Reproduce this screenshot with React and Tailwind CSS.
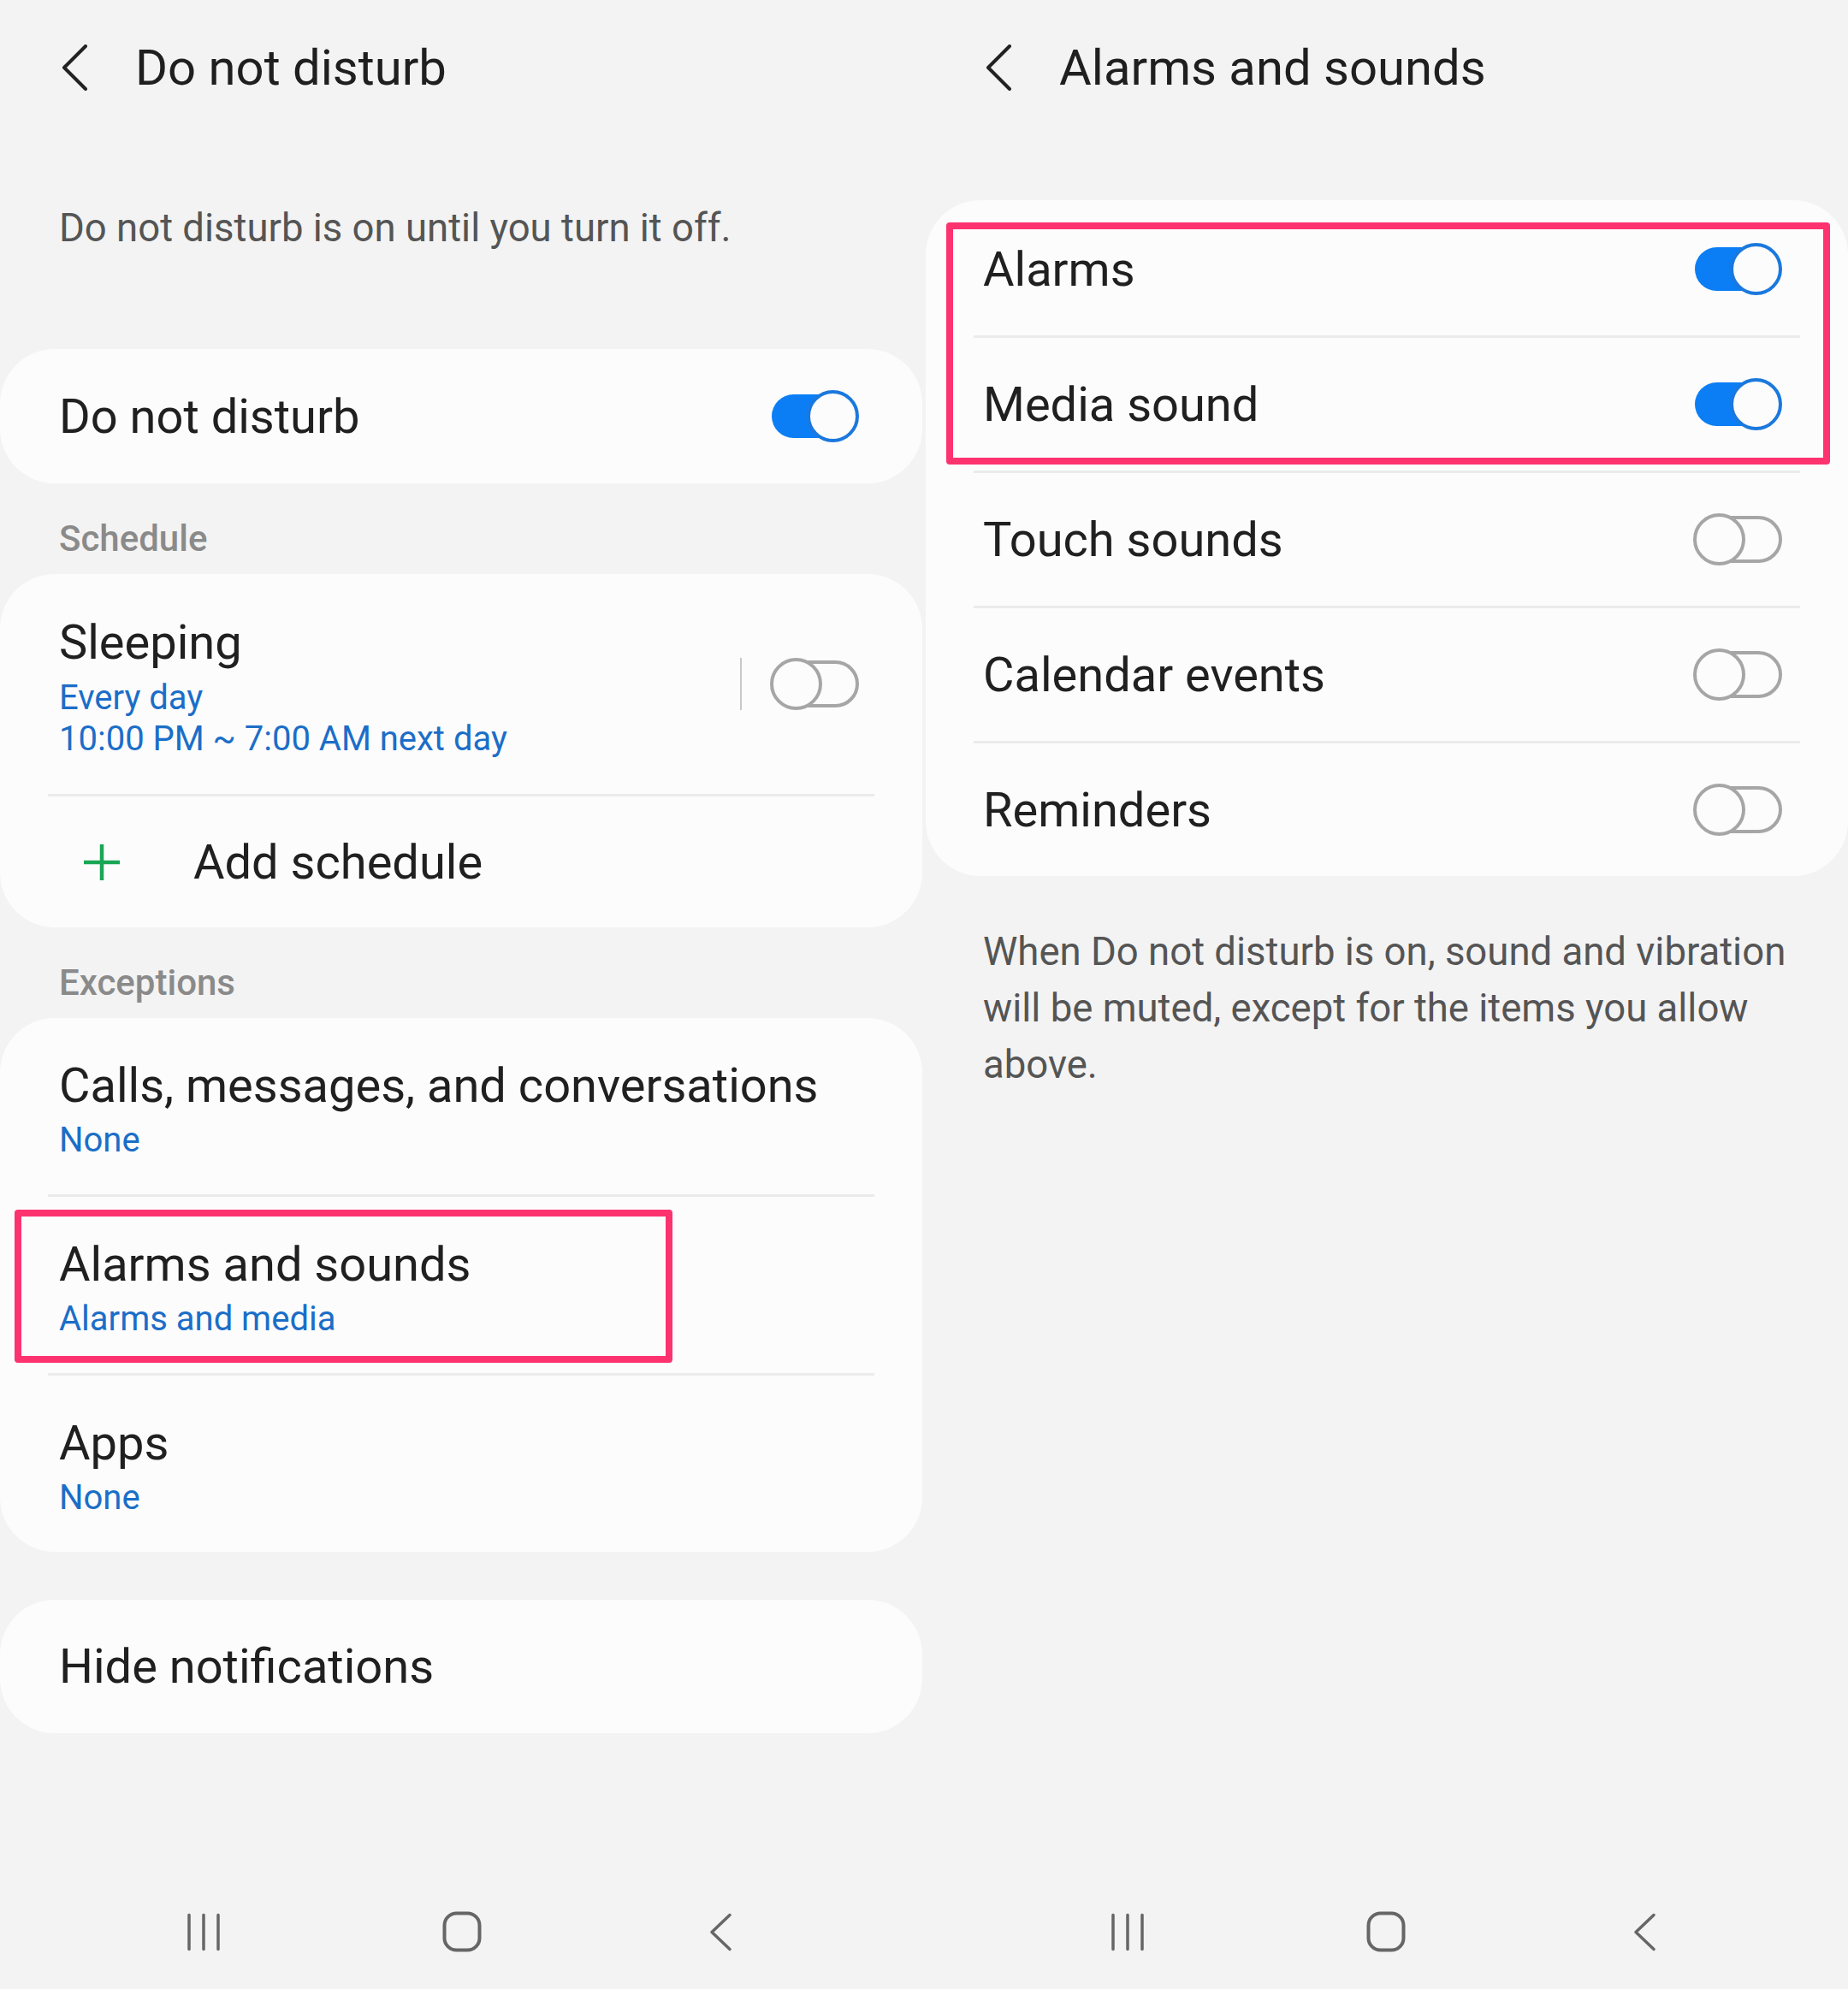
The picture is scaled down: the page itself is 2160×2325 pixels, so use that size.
import React from "react";

function Toggle({ on }) {
  if (on) {
    return (
      <div className="relative w-[102px] h-[61px] shrink-0">
        <div className="absolute left-0 top-[5px] h-[51px] w-[92px] rounded-full bg-[#0b7ef5]" />
        <div className="absolute right-0 top-0 h-[61px] w-[61px] rounded-full border-[4px] border-[#1b78dd] bg-[#fcfcfc]" />
      </div>
    );
  }
  return (
    <div className="relative w-[104px] h-[61px] shrink-0">
      <div className="absolute right-0 top-[3px] h-[55px] w-[90px] rounded-full border-[4px] border-[#a6a6a6]" />
      <div className="absolute left-0 top-0 h-[61px] w-[61px] rounded-full border-[4px] border-[#a6a6a6] bg-[#fcfcfc]" />
    </div>
  );
}

function BackChevron() {
  return (
    <svg width="32" height="54" viewBox="0 0 32 54" fill="none" className="shrink-0">
      <polyline points="28,2 3,27 28,52" stroke="#222222" strokeWidth="4" strokeLinecap="round" strokeLinejoin="round" />
    </svg>
  );
}

function Header({ title }) {
  return (
    <div className="h-[158px] flex items-center pl-[72px] shrink-0">
      <BackChevron />
      <div className="ml-[54px] text-[58px] leading-[70px] text-[#1f1f1f]">{title}</div>
    </div>
  );
}

function Divider() {
  return <div className="h-[3px] bg-[#ebebeb] mx-[56px]" />;
}

function NavBar() {
  return (
    <div className="mt-auto h-[134px] flex justify-center items-center shrink-0">
      <div className="w-[302px] flex justify-center">
        <svg width="42" height="45" viewBox="0 0 42 45" fill="none">
          <line x1="4" y1="2.5" x2="4" y2="42.5" stroke="#666666" strokeWidth="3.5" strokeLinecap="round" />
          <line x1="21" y1="2.5" x2="21" y2="42.5" stroke="#666666" strokeWidth="3.5" strokeLinecap="round" />
          <line x1="38" y1="2.5" x2="38" y2="42.5" stroke="#666666" strokeWidth="3.5" strokeLinecap="round" />
        </svg>
      </div>
      <div className="w-[302px] flex justify-center">
        <svg width="46" height="48" viewBox="0 0 46 48" fill="none">
          <rect x="2.5" y="2.5" width="41" height="43" rx="14" stroke="#666666" strokeWidth="4" />
        </svg>
      </div>
      <div className="w-[302px] flex justify-center">
        <svg width="30" height="45" viewBox="0 0 30 45" fill="none">
          <polyline points="26,2.5 5,22.5 26,42.5" stroke="#666666" strokeWidth="3.5" strokeLinecap="round" strokeLinejoin="round" />
        </svg>
      </div>
    </div>
  );
}

function SectionLabel({ children }) {
  return (
    <div className="pt-[40px] pb-[16px] pl-[69px] text-[42px] leading-[50px] font-medium text-[#8a8a8a]">
      {children}
    </div>
  );
}

function SubRow({ title, sub, highlight }) {
  return (
    <div className="relative h-[206px] pt-[47px] pl-[69px] pr-[74px]">
      <div className="text-[56px] leading-[64px] text-[#202020]">{title}</div>
      <div className="mt-[8px] text-[40px] leading-[48px] text-[#1b6ec8]">{sub}</div>
      {highlight && (
        <div className="absolute left-[17px] top-[15px] w-[769px] h-[179px] border-[8px] border-[#fd3370] rounded-[4px]" />
      )}
    </div>
  );
}

function LeftPanel() {
  return (
    <div className="w-[1080px] h-[2325px] flex flex-col">
      <Header title="Do not disturb" />
      <div className="mt-[79px] pl-[69px] text-[45.5px] leading-[60px] text-[#555555]">
        Do not disturb is on until you turn it off.
      </div>

      <div className="mt-[111px] mr-[2px] h-[157px] rounded-[64px] bg-[#fcfcfc] flex items-center justify-between pl-[69px] pr-[74px]">
        <div className="text-[56px] leading-[64px] text-[#202020]">Do not disturb</div>
        <Toggle on />
      </div>

      <SectionLabel>Schedule</SectionLabel>

      <div className="mr-[2px] rounded-[64px] bg-[#fcfcfc] flex flex-col">
        <div className="h-[257px] flex items-start pl-[69px] pr-[74px]">
          <div className="flex-1 pt-[48px]">
            <div className="text-[56px] leading-[64px] text-[#202020]">Sleeping</div>
            <div className="mt-[9px] text-[40px] leading-[48px] text-[#1b6ec8]">Every day</div>
            <div className="text-[40px] leading-[48px] text-[#1b6ec8]">10:00 PM ~ 7:00 AM next day</div>
          </div>
          <div className="self-center flex items-center">
            <div className="w-[2px] h-[61px] bg-[#c8c8c8] mr-[33px]" />
            <Toggle on={false} />
          </div>
        </div>
        <Divider />
        <div className="h-[153px] flex items-center pl-[96px]">
          <svg width="46" height="46" viewBox="0 0 46 46" fill="none" className="shrink-0">
            <line x1="23" y1="2" x2="23" y2="44" stroke="#1aa655" strokeWidth="4.5" />
            <line x1="2" y1="23" x2="44" y2="23" stroke="#1aa655" strokeWidth="4.5" />
          </svg>
          <div className="ml-[84px] text-[56px] leading-[64px] text-[#202020]">Add schedule</div>
        </div>
      </div>

      <SectionLabel>Exceptions</SectionLabel>

      <div className="mr-[2px] rounded-[64px] bg-[#fcfcfc] flex flex-col">
        <SubRow title="Calls, messages, and conversations" sub="None" />
        <Divider />
        <SubRow title="Alarms and sounds" sub="Alarms and media" highlight />
        <Divider />
        <SubRow title="Apps" sub="None" />
      </div>

      <div className="mt-[56px] mr-[2px] h-[156px] rounded-[64px] bg-[#fcfcfc] flex items-center pl-[69px]">
        <div className="text-[56px] leading-[64px] text-[#202020]">Hide notifications</div>
      </div>

      <NavBar />
    </div>
  );
}

function ToggleRow({ label, on }) {
  return (
    <div className="h-[155px] flex items-center justify-between pl-[67px] pr-[77px]">
      <div className="text-[56px] leading-[64px] text-[#202020]">{label}</div>
      <Toggle on={on} />
    </div>
  );
}

function RightPanel() {
  return (
    <div className="w-[1080px] h-[2325px] flex flex-col">
      <Header title="Alarms and sounds" />
      <div className="relative mt-[76px] ml-[2px] pt-[3px] rounded-[64px] bg-[#fcfcfc] flex flex-col">
        <ToggleRow label="Alarms" on />
        <Divider />
        <ToggleRow label="Media sound" on />
        <Divider />
        <ToggleRow label="Touch sounds" on={false} />
        <Divider />
        <ToggleRow label="Calendar events" on={false} />
        <Divider />
        <ToggleRow label="Reminders" on={false} />
        <div className="absolute left-[24px] top-[26px] w-[1033px] h-[283px] border-[8px] border-[#fd3370] rounded-[4px]" />
      </div>
      <div className="mt-[56px] pl-[69px] text-[45.5px] leading-[66px] text-[#555555] whitespace-nowrap">
        When Do not disturb is on, sound and vibration
        <br />
        will be muted, except for the items you allow
        <br />
        above.
      </div>
      <NavBar />
    </div>
  );
}

export default function App() {
  return (
    <div className="w-[2160px] h-[2325px] flex bg-[#f3f3f3] font-['Roboto','Liberation_Sans',sans-serif] overflow-hidden">
      <LeftPanel />
      <RightPanel />
    </div>
  );
}
